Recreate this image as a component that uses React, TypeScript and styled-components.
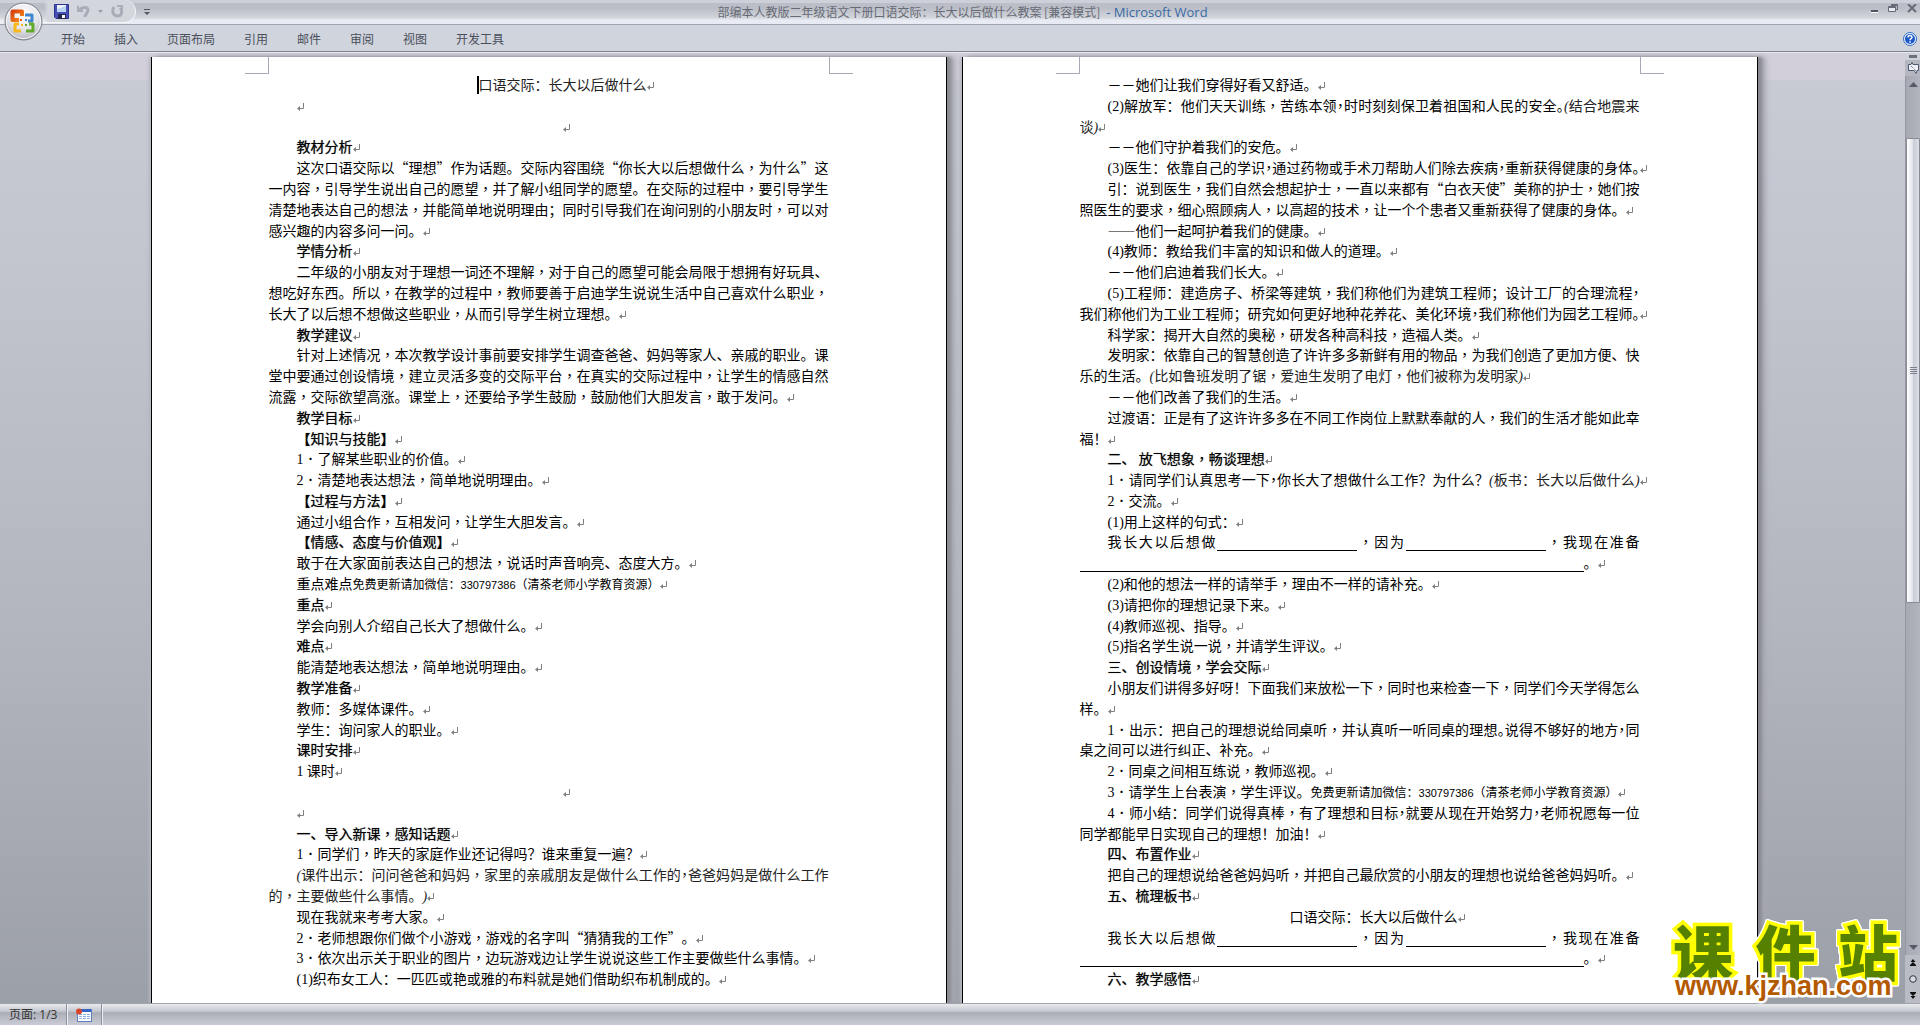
import React from 'react';
import styled, { createGlobalStyle, css } from 'styled-components';

const CJK = '"Noto Sans CJK SC", sans-serif';

const GlobalStyle = createGlobalStyle`
  body { margin: 0; overflow: hidden; }
  * { box-sizing: border-box; }
  button { border: 0; padding: 0; margin: 0; background: none; font: inherit; color: inherit; }
`;

const Window = styled.div`
  display: flex;
  flex-direction: column;
  height: 100vh;
  background: #d0d4dd;
  font: 12px/16px ${CJK};
  color: #3f444f;
`;

/* ---------- title bar and ribbon ---------- */

const Header = styled.header`
  position: relative;
  flex: none;
`;

const TitleBar = styled.div`
  display: flex;
  align-items: stretch;
  height: 25px;
  border-bottom: 1px solid #9fa3ad;
  background: linear-gradient(#cdd0d8 0 3px, #bbbec7 3px 8px, #c4c7cf 12px, #d4d7dc 18px, #e8ebf3 20px);
`;

const OfficeButton = styled.button`
  position: absolute;
  left: 4px;
  top: 2px;
  width: 39px;
  height: 39px;
  svg { display: block; }
`;

const QuickAccess = styled.div`
  display: flex;
  align-items: center;
  gap: 8px;
  width: 136px;
  height: 23px;
  padding-left: 54px;
  border-bottom: 1px solid #f3f4f8;
  border-right: 1px solid #f3f4f8;
  border-radius: 0 12px 12px 0;
  background: linear-gradient(90deg, transparent 44px, #d3d6dd 48px);
`;

const IconButton = styled.button`
  display: flex;
  flex: none;
  svg { display: block; }
`;

const CustomizeButton = styled(IconButton)`
  align-items: center;
  padding-left: 8px;
`;

const Title = styled.h1`
  flex: 1;
  display: flex;
  justify-content: center;
  align-items: center;
  gap: 6px;
  margin: 0;
  padding-right: 96px;
  font: 12px/16px ${CJK};
  color: #666a75;
  white-space: pre;
`;

const AppName = styled.span`
  font: 13px/16px "Open Sans", sans-serif;
  color: #3a6aa5;
`;

const WindowButtons = styled.div`
  display: flex;
  gap: 9px;
  padding: 4px 3px 0 0;
  align-items: flex-start;
`;

const Ribbon = styled.nav`
  display: flex;
  align-items: center;
  gap: 29px;
  height: 28px;
  padding: 0 3px 0 61px;
  border-bottom: 1px solid #e6e8ed;
  box-shadow: inset 0 -1px #7f848e;
`;

const Tab = styled.button`
  font: 12px/18px ${CJK};
  color: #4a4f5b;
`;

const HelpButton = styled(IconButton)`
  margin-left: auto;
`;

/* ---------- document area ---------- */

const Workspace = styled.main`
  position: relative;
  flex: 1;
  min-height: 0;
  display: flex;
  background: linear-gradient(#d2ceda 27px, #c8cad4 27px, #c3c6cf 20%, #b3b6bf 60%, #9b9fa7 100%);
`;

const Pages = styled.div`
  flex: 1;
  display: flex;
  justify-content: center;
  gap: 15px;
  padding: 4px 0 0 3px;
  overflow: hidden;
`;

const Page = styled.article`
  flex: none;
  display: flex;
  flex-direction: column;
  width: 796px;
  padding: 0 117px 14px;
  border: solid #000;
  border-width: 0 1px;
  background: #fff;
  box-shadow: 4px 0 3px #8a8b92, 8px 0 5px #a9abb3, -2px 0 3px #b4b6bf;
`;

const CropMarks = styled.div`
  display: flex;
  justify-content: space-between;
  flex: none;
  height: 17px;
  margin: 0 -24px;
`;

const CropMark = styled.span<{ $side: 'left' | 'right' }>`
  width: 24px;
  border: 0 solid #a9a9b5;
  border-bottom-width: 1px;
  ${(p) => (p.$side === 'left' ? 'border-right-width: 1px;' : 'border-left-width: 1px;')}
`;

const TextBody = styled.div`
  flex: 1;
  min-height: 0;
  display: grid;
  grid-template-rows: repeat(44, minmax(20px, 1fr));
  text-spacing-trim: space-all;
`;

const LineRow = styled.p<{ $align: Align; $indent: boolean; $heading: boolean }>`
  margin: 0;
  padding-left: ${(p) => (p.$indent ? 28 : 0)}px;
  font: 14px/20px ${CJK};
  color: #000;
  white-space: nowrap;
  text-align: ${(p) => (p.$align === 'center' ? 'center' : 'left')};
  text-align-last: ${(p) => p.$align};
  ${(p) => p.$heading && css`text-shadow: 0 0 1px rgba(0, 0, 0, 0.6);`}
`;

const Span = styled.span<{ $kind: Kind }>`
  line-height: 0;
  ${(p) => p.$kind === 'kai' && css`color: #222;`}
  ${(p) => p.$kind === 'small' && css`font-size: 12px;`}
`;

const Latin = styled.span<{ $kind: Kind }>`
  font-family: "Liberation Serif", serif;
  ${(p) => p.$kind === 'kai' && css`font-style: italic;`}
  ${(p) => p.$kind === 'small' && css`font: 11px/0 "Liberation Sans", sans-serif;`}
`;

const Punct = styled.span<{ $half: boolean; $centred: boolean }>`
  ${(p) => p.$centred && css`font-family: "Noto Sans CJK TC", sans-serif;`}
  ${(p) => p.$half && css`font-feature-settings: "halt";`}
`;

const Dash = styled.span`
  font-feature-settings: "fwid";
`;

const Blank = styled.span<{ $long: boolean }>`
  display: inline-block;
  width: ${(p) => (p.$long ? 504 : 140)}px;
  height: 16px;
  border-bottom: 1px solid #000;
  vertical-align: text-bottom;
`;

const Caret = styled.span`
  display: inline-block;
  width: 2px;
  height: 18px;
  margin-left: -2px;
  background: #000;
  vertical-align: text-bottom;
`;

const MarkSvg = styled.svg`
  width: 7px;
  height: 8px;
  margin-right: -7px;
`;

/* ---------- scroll bar ---------- */

const ScrollColumn = styled.aside`
  flex: none;
  display: flex;
  flex-direction: column;
  width: 15px;
  background: #b4b7c0;
`;

const SplitBox = styled.div`
  flex: none;
  height: 7px;
  padding: 2px 3px 2px 4px;
  background: #cfd1d9;
  &::before { content: ""; display: block; height: 3px; background: #6d7079; }
`;

const RulerButton = styled(IconButton)`
  justify-content: center;
  align-items: center;
  height: 16px;
`;

const Track = styled.div`
  flex: 1;
  display: flex;
  flex-direction: column;
  border-left: 1px solid #94979f;
  background: linear-gradient(90deg, #a6a9b2, #b2b5be);
`;

const ScrollButton = styled(IconButton)`
  justify-content: center;
  align-items: center;
  height: 16px;
`;

const ThumbLane = styled.div`
  flex: 1;
  padding-top: 46px;
`;

const Thumb = styled.div`
  display: flex;
  align-items: center;
  justify-content: center;
  height: 58%;
  border: 1px solid #878b95;
  border-radius: 1px;
  background: linear-gradient(90deg, #fff, #e4e6ec 45%, #c9ccd5 55%, #dcdfe6);
`;

const BrowseButtons = styled.div`
  flex: none;
  display: flex;
  flex-direction: column;
  align-items: center;
  justify-content: space-around;
  height: 48px;
  background: #b9bcc5;
`;

/* ---------- watermark and status bar ---------- */

const Watermark = styled.div`
  position: absolute;
  right: 24px;
  bottom: 3px;
  width: 221px;
`;

const WatermarkName = styled.div`
  display: flex;
  justify-content: space-between;
  margin: 0 -2px;
  font: 900 60px/44px ${CJK};
  color: #558000;
  -webkit-text-stroke: 7px #ffff00;
  paint-order: stroke fill;
  filter: drop-shadow(1px 0 #fff) drop-shadow(-1px 0 #fff) drop-shadow(0 1px #fff) drop-shadow(0 -1px #fff);
`;

const WatermarkUrl = styled.a`
  position: relative;
  display: block;
  font: bold 27px/28px "Liberation Sans", sans-serif;
  color: #b35900;
  text-decoration: none;
  -webkit-text-stroke: 5px #fff;
  paint-order: stroke fill;
`;

const StatusBar = styled.footer`
  flex: none;
  display: flex;
  align-items: stretch;
  height: 22px;
  border-top: 1px solid #a0a3ac;
  background: linear-gradient(#e8eaee, #c6c9d0 7px, #a9acb5 9px, #b4b7c0 12px, #c9ccd5);
`;

const StatusItem = styled.button`
  display: flex;
  align-items: center;
  padding: 0 9px;
  border-right: 1px solid #8f929b;
  box-shadow: 1px 0 #eceef2;
  font: 12px/16px "Open Sans", ${CJK};
  color: #333;
`;

/* ---------- content ---------- */

type Kind = 'body' | 'kai' | 'small';
type Align = 'left' | 'center' | 'justify';
type Run = string | [Kind, string] | { blank: 'short' | 'long' };

interface LineData {
  runs: Run[];
  align?: Align;
  indent?: boolean;
  /** how many of the last punctuation marks are set half width */
  tight?: number;
  mark?: boolean;
  caret?: boolean;
  heading?: boolean;
}

const end = (...runs: Run[]): LineData => ({ runs, mark: true, indent: true });
const tail = (...runs: Run[]): LineData => ({ runs, mark: true });
const head = (text: string): LineData => ({ ...end(text), heading: true });
const first = (...runs: Run[]): LineData => ({ runs, align: 'justify', indent: true });
const full = (...runs: Run[]): LineData => ({ runs, align: 'justify' });
const tight = (count: number, line: LineData): LineData => ({ ...line, tight: count, align: 'justify' });
const centre = (...runs: Run[]): LineData => ({ runs, align: 'center', indent: true, mark: true });

const CONTACT: Run = ['small', '免费更新请加微信：330797386（清茶老师小学教育资源）'];
const SHORT: Run = { blank: 'short' };
const LONG: Run = { blank: 'long' };

const LEFT: LineData[] = [
  { ...centre(['kai', '口语交际：长大以后做什么']), caret: true },
  end(),
  centre(),
  head('教材分析'),
  first('这次口语交际以“理想”作为话题。交际内容围绕“你长大以后想做什么，为什么”这'),
  full('一内容，引导学生说出自己的愿望，并了解小组同学的愿望。在交际的过程中，要引导学生'),
  full('清楚地表达自己的想法，并能简单地说明理由；同时引导我们在询问别的小朋友时，可以对'),
  tail('感兴趣的内容多问一问。'),
  head('学情分析'),
  first('二年级的小朋友对于理想一词还不理解，对于自己的愿望可能会局限于想拥有好玩具、'),
  full('想吃好东西。所以，在教学的过程中，教师要善于启迪学生说说生活中自己喜欢什么职业，'),
  tail('长大了以后想不想做这些职业，从而引导学生树立理想。'),
  head('教学建议'),
  first('针对上述情况，本次教学设计事前要安排学生调查爸爸、妈妈等家人、亲戚的职业。课'),
  full('堂中要通过创设情境，建立灵活多变的交际平台，在真实的交际过程中，让学生的情感自然'),
  tail('流露，交际欲望高涨。课堂上，还要给予学生鼓励，鼓励他们大胆发言，敢于发问。'),
  head('教学目标'),
  head('【知识与技能】'),
  end('1．了解某些职业的价值。'),
  end('2．清楚地表达想法，简单地说明理由。'),
  head('【过程与方法】'),
  end('通过小组合作，互相发问，让学生大胆发言。'),
  head('【情感、态度与价值观】'),
  end('敢于在大家面前表达自己的想法，说话时声音响亮、态度大方。'),
  end('重点难点', CONTACT),
  head('重点'),
  end('学会向别人介绍自己长大了想做什么。'),
  head('难点'),
  end('能清楚地表达想法，简单地说明理由。'),
  head('教学准备'),
  end('教师：多媒体课件。'),
  end('学生：询问家人的职业。'),
  head('课时安排'),
  end('1 课时'),
  centre(),
  end(),
  head('一、导入新课，感知话题'),
  end('1．同学们，昨天的家庭作业还记得吗？谁来重复一遍？'),
  tight(1, first(['kai', '(课件出示：问问爸爸和妈妈，家里的亲戚朋友是做什么工作的，爸爸妈妈是做什么工作'])),
  tail(['kai', '的，主要做些什么事情。)']),
  end('现在我就来考考大家。'),
  end('2．老师想跟你们做个小游戏，游戏的名字叫“猜猜我的工作”。'),
  end('3．依次出示关于职业的图片，边玩游戏边让学生说说这些工作主要做些什么事情。'),
  end('(1)织布女工人：一匹匹或艳或雅的布料就是她们借助织布机制成的。'),
];

const RIGHT: LineData[] = [
  end('－－她们让我们穿得好看又舒适。'),
  tight(2, first('(2)解放军：他们天天训练，苦练本领，时时刻刻保卫着祖国和人民的安全。', ['kai', '(结合地震来'])),
  tail(['kai', '谈)']),
  end('－－他们守护着我们的安危。'),
  tight(3, end('(3)医生：依靠自己的学识，通过药物或手术刀帮助人们除去疾病，重新获得健康的身体。')),
  first('引：说到医生，我们自然会想起护士，一直以来都有“白衣天使”美称的护士，她们按'),
  tail('照医生的要求，细心照顾病人，以高超的技术，让一个个患者又重新获得了健康的身体。'),
  end('——他们一起呵护着我们的健康。'),
  end('(4)教师：教给我们丰富的知识和做人的道理。'),
  end('－－他们启迪着我们长大。'),
  tight(1, first('(5)工程师：建造房子、桥梁等建筑，我们称他们为建筑工程师；设计工厂的合理流程，')),
  tight(2, tail('我们称他们为工业工程师；研究如何更好地种花养花、美化环境，我们称他们为园艺工程师。')),
  end('科学家：揭开大自然的奥秘，研发各种高科技，造福人类。'),
  first('发明家：依靠自己的智慧创造了许许多多新鲜有用的物品，为我们创造了更加方便、快'),
  tail('乐的生活。', ['kai', '(比如鲁班发明了锯，爱迪生发明了电灯，他们被称为发明家)']),
  end('－－他们改善了我们的生活。'),
  first('过渡语：正是有了这许许多多在不同工作岗位上默默奉献的人，我们的生活才能如此幸'),
  tail('福！'),
  head('二、 放飞想象，畅谈理想'),
  tight(1, end('1．请同学们认真思考一下，你长大了想做什么工作？为什么？', ['kai', '(板书：长大以后做什么)'])),
  end('2．交流。'),
  end('(1)用上这样的句式：'),
  first('我长大以后想做', SHORT, '，因为', SHORT, '，我现在准备'),
  tail(LONG, '。'),
  end('(2)和他的想法一样的请举手，理由不一样的请补充。'),
  end('(3)请把你的理想记录下来。'),
  end('(4)教师巡视、指导。'),
  end('(5)指名学生说一说，并请学生评议。'),
  head('三、创设情境，学会交际'),
  first('小朋友们讲得多好呀！下面我们来放松一下，同时也来检查一下，同学们今天学得怎么'),
  tail('样。'),
  tight(2, first('1．出示：把自己的理想说给同桌听，并认真听一听同桌的理想。说得不够好的地方，同')),
  tail('桌之间可以进行纠正、补充。'),
  end('2．同桌之间相互练说，教师巡视。'),
  end('3．请学生上台表演，学生评议。', CONTACT),
  tight(2, first('4．师小结：同学们说得真棒，有了理想和目标，就要从现在开始努力，老师祝愿每一位')),
  tail('同学都能早日实现自己的理想！加油！'),
  head('四、布置作业'),
  end('把自己的理想说给爸爸妈妈听，并把自己最欣赏的小朋友的理想也说给爸爸妈妈听。'),
  head('五、梳理板书'),
  centre('口语交际：长大以后做什么'),
  first('我长大以后想做', SHORT, '，因为', SHORT, '，我现在准备'),
  tail(LONG, '。'),
  head('六、教学感悟'),
];

const TABS = ['开始', '插入', '页面布局', '引用', '邮件', '审阅', '视图', '开发工具'];

/* ---------- pieces ---------- */

function Text({ kind, text, tightCount }: { kind: Kind; text: string; tightCount: number }) {
  const parts = text.split(/([0-9()]+|——|[，．。；、])/).filter(Boolean);
  const halved = new Set(
    parts.map((part, i) => (/^[，。；、]$/.test(part) ? i : -1)).filter((i) => i >= 0).slice(-tightCount || Infinity),
  );
  return (
    <Span $kind={kind}>
      {parts.map((part, i) => {
        if (/^[0-9()]/.test(part)) return <Latin key={i} $kind={kind}>{part}</Latin>;
        if (part === '——') return <Dash key={i}>{part}</Dash>;
        const centred = /^[，．]$/.test(part);
        if (centred || halved.has(i))
          return <Punct key={i} $centred={centred} $half={halved.has(i)}>{part}</Punct>;
        return part;
      })}
    </Span>
  );
}

function ParagraphMark() {
  return (
    <MarkSvg viewBox="0 0 7 8" aria-hidden="true">
      <path d="M6.500 0V5.500H2" fill="none" stroke="#808080" />
      <path d="M0 5.500L3 3V8z" fill="#808080" />
    </MarkSvg>
  );
}

function Line({ line }: { line: LineData }) {
  const tightCount = line.tight ?? 0;
  return (
    <LineRow
      $align={line.align ?? 'left'}
      $indent={!!line.indent}
      $heading={!!line.heading}
      role={line.heading ? 'heading' : undefined}
      aria-level={line.heading ? 2 : undefined}
    >
      {line.caret && <Caret />}
      {line.runs.map((run, i) => {
        if (typeof run === 'string') return <Text key={i} kind="body" text={run} tightCount={tightCount} />;
        if (Array.isArray(run)) return <Text key={i} kind={run[0]} text={run[1]} tightCount={tightCount} />;
        return <Blank key={i} $long={run.blank === 'long'} />;
      })}
      {line.mark && <ParagraphMark />}
    </LineRow>
  );
}

function Sheet({ lines }: { lines: LineData[] }) {
  return (
    <Page>
      <CropMarks>
        <CropMark $side="left" />
        <CropMark $side="right" />
      </CropMarks>
      <TextBody>
        {lines.map((line, i) => <Line key={i} line={line} />)}
      </TextBody>
    </Page>
  );
}

function OfficeLogo() {
  return (
    <svg width="39" height="39" viewBox="0 0 39 39">
      <defs>
        <radialGradient id="orb" cx="50%" cy="30%" r="70%">
          <stop offset="0" stopColor="#ffffff" />
          <stop offset="0.6" stopColor="#e2e3e8" />
          <stop offset="1" stopColor="#b5b7be" />
        </radialGradient>
        <linearGradient id="red" x2="1" y2="1">
          <stop offset="0" stopColor="#d8420c" />
          <stop offset="1" stopColor="#f58a1c" />
        </linearGradient>
      </defs>
      <circle cx="19.500" cy="19.500" r="18.500" fill="url(#orb)" stroke="#7c7f88" />
      <circle cx="19.500" cy="19.500" r="17" fill="none" stroke="#fff" opacity="0.8" />
      <g fill="none" strokeWidth="3" strokeLinejoin="round">
        <path d="M15 18H8.500V9.500H18V14" stroke="url(#red)" strokeWidth="4" />
        <path d="M21 13H28V19H24" stroke="#3f86cf" />
        <path d="M17 29H11V22H15" stroke="#f6b81c" />
        <path d="M22 29H29V22H25" stroke="#63a92c" />
      </g>
      <g>
        <rect x="16" y="17" width="2" height="2" fill="#ea5a13" />
        <rect x="21" y="17" width="2" height="2" fill="#3f86cf" />
        <rect x="17" y="22" width="2" height="2" fill="#f6b81c" />
        <rect x="21" y="22" width="2" height="2" fill="#63a92c" />
      </g>
    </svg>
  );
}

function ScrollArrow({ up }: { up?: boolean }) {
  return (
    <svg width="9" height="5" viewBox="0 0 9 5">
      <path d={up ? 'M4.500 0L9 5H0z' : 'M0 0H9L4.500 5z'} fill="#565a64" />
    </svg>
  );
}

function DoubleArrow({ up }: { up?: boolean }) {
  return (
    <svg width="6" height="8" viewBox="0 0 6 8">
      <path
        d={up ? 'M3 0L5.500 3H.5zM3 3L6 6H0zM0 6H6V7H0z' : 'M3 8L5.500 5H.5zM3 5L6 2H0zM0 1H6V2H0z'}
        fill="#111"
      />
    </svg>
  );
}

export default function App() {
  return (
    <Window>
      <GlobalStyle />
      <Header>
        <TitleBar>
          <QuickAccess>
            <IconButton aria-label="保存">
              <svg width="15" height="15" viewBox="0 0 15 15">
                <path d="M0.500 0.500H14.500V14.500H2L0.500 13z" fill="#4650b4" stroke="#2c338c" />
                <rect x="3" y="1" width="9" height="7" fill="#eef3fb" />
                <path d="M3 5L12 2V8H3z" fill="#b9d3f2" />
                <rect x="4" y="10" width="8" height="5" fill="#23264f" />
                <rect x="8" y="11" width="3" height="3" fill="#fff" />
              </svg>
            </IconButton>
            <IconButton aria-label="撤消">
              <svg width="13" height="13" viewBox="0 0 13 13" fill="none" stroke="#a9adb8" strokeWidth="2">
                <path d="M1 1V6H6" />
                <path d="M2 6C4 2 11 1 11 5C11 8 8 9 8 12" strokeWidth="3" />
              </svg>
            </IconButton>
            <IconButton aria-label="撤消列表">
              <svg width="5" height="3" viewBox="0 0 5 3"><path d="M0 0H5L2.500 3z" fill="#9a9da8" /></svg>
            </IconButton>
            <IconButton aria-label="重复">
              <svg width="13" height="13" viewBox="0 0 13 13" fill="none" stroke="#a9adb8" strokeWidth="3">
                <path d="M3 2C0 7 3 11 6.500 11C11 11 12 6 9 3" />
                <path d="M6 1H11V5" strokeWidth="2" />
              </svg>
            </IconButton>
          </QuickAccess>
          <CustomizeButton aria-label="自定义快速访问工具栏">
            <svg width="6" height="6" viewBox="0 0 6 6">
              <path d="M0 0H6V1H0zM0 3H6L3 6z" fill="#555963" />
            </svg>
          </CustomizeButton>
          <Title>
            <span>部编本人教版二年级语文下册口语交际：长大以后做什么教案 [兼容模式]</span>
            <AppName>- Microsoft Word</AppName>
          </Title>
          <WindowButtons>
            <IconButton aria-label="最小化">
              <svg width="8" height="9" viewBox="0 0 8 9"><path d="M0 6H7V8H0z" fill="#50545e" /><path d="M0 8H7V9H0z" fill="#fff" /></svg>
            </IconButton>
            <IconButton aria-label="还原">
              <svg width="10" height="9" viewBox="0 0 10 9" fill="none" stroke="#666b77">
                <path d="M3 0.500H9.500V5.500H8M3 1.500H9" />
                <path d="M0.500 2.500H7.500V7.500H0.500zM1 3.500H7" fill="#e8ebf2" />
              </svg>
            </IconButton>
            <IconButton aria-label="关闭">
              <svg width="10" height="9" viewBox="0 0 10 9"><path d="M1 0L9 8M9 0L1 8" stroke="#666b77" strokeWidth="2" /></svg>
            </IconButton>
          </WindowButtons>
        </TitleBar>
        <Ribbon>
          {TABS.map((tab) => <Tab key={tab}>{tab}</Tab>)}
          <HelpButton aria-label="帮助">
            <svg width="14" height="14" viewBox="0 0 14 14">
              <circle cx="7" cy="7" r="6.500" fill="#e9f2fc" stroke="#3a6cc0" />
              <circle cx="7" cy="7" r="5" fill="#1c57c8" />
              <path d="M5 5.500C5 3 9 3 9 5.300C9 6.800 7 6.600 7 8.300M7 9.300V10.800" fill="none" stroke="#fff" strokeWidth="1.500" />
            </svg>
          </HelpButton>
        </Ribbon>
        <OfficeButton aria-label="Office 按钮"><OfficeLogo /></OfficeButton>
      </Header>

      <Workspace>
        <Pages>
          <Sheet lines={LEFT} />
          <Sheet lines={RIGHT} />
        </Pages>
        <ScrollColumn>
          <SplitBox />
          <RulerButton aria-label="标尺">
            <svg width="12" height="12" viewBox="0 0 12 12">
              <path d="M1.500 2.500H4L5 0.500L6 2.500H11.500V8.500H10L9 11.500L7 8.500H1.500z" fill="#eef0f5" stroke="#4c5a72" />
              <path d="M4 4L9 9" stroke="#4c5a72" strokeDasharray="1 1" />
            </svg>
          </RulerButton>
          <Track>
            <ScrollButton aria-label="向上滚动"><ScrollArrow up /></ScrollButton>
            <ThumbLane>
              <Thumb>
                <svg width="7" height="7" viewBox="0 0 7 7">
                  <path d="M0 .5H7M0 2.500H7M0 4.500H7M0 6.500H7" stroke="#7c808b" />
                </svg>
              </Thumb>
            </ThumbLane>
            <ScrollButton aria-label="向下滚动"><ScrollArrow /></ScrollButton>
          </Track>
          <BrowseButtons>
            <IconButton aria-label="前一页"><DoubleArrow up /></IconButton>
            <IconButton aria-label="选择浏览对象">
              <svg width="8" height="8" viewBox="0 0 8 8"><circle cx="4" cy="4" r="3.300" fill="#d8dae0" stroke="#33363e" /></svg>
            </IconButton>
            <IconButton aria-label="下一页"><DoubleArrow /></IconButton>
          </BrowseButtons>
        </ScrollColumn>
        <Watermark>
          <WatermarkName><span>课</span><span>件</span><span>站</span></WatermarkName>
          <WatermarkUrl href="#">www.kjzhan.com</WatermarkUrl>
        </Watermark>
      </Workspace>

      <StatusBar>
        <StatusItem>页面: 1/3</StatusItem>
        <StatusItem aria-label="宏录制">
          <svg width="16" height="14" viewBox="0 0 16 14">
            <rect x="1.500" y="1.500" width="14" height="12" fill="#fff" stroke="#5b7fc0" />
            <rect x="2" y="1" width="13" height="3" fill="#3565c4" />
            <path d="M3 6.500H14M3 8.500H14M3 10.500H14" stroke="#8fb0e4" strokeDasharray="3 1" />
            <circle cx="3" cy="3.500" r="3" fill="#d8452a" />
          </svg>
        </StatusItem>
      </StatusBar>
    </Window>
  );
}
